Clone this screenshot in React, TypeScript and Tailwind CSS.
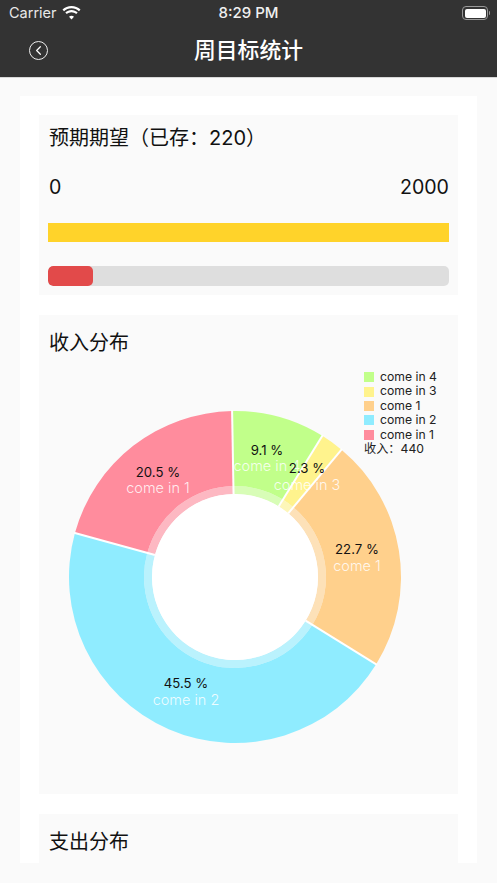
import { ChevronLeft } from "lucide-react";

const slices = [
  { name: "come in 4", value: 40, color: "#c1ff8a", pct: "9.1 %", x: 267, y: 450, ly: 466 },
  { name: "come in 3", value: 10, color: "#fff38d", pct: "2.3 %", x: 307, y: 468, ly: 485 },
  { name: "come 1", value: 100, color: "#ffd08c", pct: "22.7 %", x: 357, y: 549, ly: 566 },
  { name: "come in 2", value: 200, color: "#8fecff", pct: "45.5 %", x: 186, y: 683, ly: 700 },
  { name: "come in 1", value: 90, color: "#ff8c9d", pct: "20.5 %", x: 158, y: 472, ly: 488 },
];

const CX = 235;
const CY = 577;
const TOTAL = 440;
const START = (-1 * Math.PI) / 180; // the first slice starts just left of 12 o'clock

function polar(r: number, a: number) {
  return [CX + r * Math.sin(a), CY - r * Math.cos(a)];
}

function arc(r0: number, r1: number, a0: number, a1: number) {
  const large = a1 - a0 > Math.PI ? 1 : 0;
  const [x0, y0] = polar(r1, a0);
  const [x1, y1] = polar(r1, a1);
  const [x2, y2] = polar(r0, a1);
  const [x3, y3] = polar(r0, a0);
  return `M${x0} ${y0}A${r1} ${r1} 0 ${large} 1 ${x1} ${y1}L${x2} ${y2}A${r0} ${r0} 0 ${large} 0 ${x3} ${y3}Z`;
}

function PieChart() {
  let angle = START;
  const wedges = slices.map((s) => {
    const start = angle;
    angle += (s.value / TOTAL) * Math.PI * 2;
    return { ...s, start, end: angle };
  });

  return (
    <div className="relative flex-1">
      <svg viewBox="39 363 419 431" className="block w-full h-full">
        {wedges.map((w) => (
          <path key={w.name} d={arc(91, 166, w.start, w.end)} fill={w.color} />
        ))}
        {wedges.map((w) => (
          <path key={w.name} d={arc(83, 91, w.start, w.end)} fill={w.color} opacity={0.6} />
        ))}
        {wedges.map((w) => {
          const [x0, y0] = polar(83, w.start);
          const [x1, y1] = polar(167, w.start);
          return <line key={w.name} x1={x0} y1={y0} x2={x1} y2={y1} stroke="#fff" strokeWidth={2} />;
        })}
        <circle cx={CX} cy={CY} r={83} fill="#fff" />
        {wedges.map((w) => (
          <g key={w.name} textAnchor="middle" fontFamily="Inter, sans-serif">
            <text x={w.x} y={w.y + 5} fontSize={13.2} fill="#111">
              {w.pct}
            </text>
            <text x={w.x} y={w.ly + 5} fontSize={14.5} fontWeight={300} fill="#fff" fillOpacity={0.85}>
              {w.name}
            </text>
          </g>
        ))}
      </svg>

      {/* Legend */}
      <div className="absolute left-[325px] top-[7px] flex flex-col text-[12.2px] leading-[14.4px] text-[#222]">
        {slices.map((s) => (
          <div key={s.name} className="flex items-center gap-[6px]">
            <span className="w-[10px] h-[10px]" style={{ backgroundColor: s.color }} />
            {s.name}
          </div>
        ))}
        <div>收入：440</div>
      </div>
    </div>
  );
}

export default function App() {
  return (
    <div className="h-[883px] w-[497px] overflow-hidden bg-[#fafafa] font-['Inter','Noto_Sans_CJK_SC',sans-serif] text-[#111]">
      {/* Status bar + nav */}
      <div className="h-[78px] bg-[#333333] border-b border-[#d8d8d8] text-white">
        <div className="h-[26px] pl-[9px] pr-[7px] flex items-center justify-between relative text-[14.5px]">
          <div className="flex items-center gap-[5px] text-[#e8e8e8]">
            Carrier
            <svg width="19" height="14" viewBox="0 0 19 14" fill="#fff">
              <path d="M9.500 2.200c2.900 0 5.500 1.100 7.500 3l1.500-1.600C16.100 1.400 13 0 9.500 0S2.900 1.400.5 3.600L2 5.200c2-1.900 4.600-3 7.500-3z" />
              <path d="M9.500 6.300c1.800 0 3.400.7 4.700 1.800l1.500-1.600c-1.700-1.500-3.900-2.400-6.200-2.400s-4.500.9-6.200 2.400l1.500 1.600c1.300-1.100 2.900-1.800 4.700-1.800z" />
              <path d="M9.500 9.800c-1 0-1.800.4-2.500 1l2.500 2.800 2.500-2.800c-.7-.6-1.500-1-2.500-1z" />
            </svg>
          </div>
          <span className="absolute left-1/2 -translate-x-1/2 text-[15px] font-medium text-[#f0f0f0]">8:29 PM</span>
          <div className="flex items-center gap-[1px]">
            <div className="w-[26px] h-[14px] rounded-[4px] border border-[#999] p-[1.5px]">
              <div className="h-full w-full rounded-[2px] bg-white" />
            </div>
            <div className="w-[1px] h-[4px] bg-[#999] rounded-r-sm" />
          </div>
        </div>
        <div className="h-[51px] flex items-center justify-center relative">
          <div className="absolute left-[29px] top-[15px] w-[19px] h-[19px] rounded-full border-[1.5px] border-[#eee] flex items-center justify-center">
            <ChevronLeft size={15} strokeWidth={1.9} className="-ml-[1px]" />
          </div>
          <span className="text-[21.8px] font-medium -mt-[2px]">周目标统计</span>
        </div>
      </div>

      {/* Card */}
      <div className="mx-5 mt-[18px] h-[767px] overflow-hidden bg-white p-[19px] flex flex-col gap-[20px]">
        <section className="h-[180px] shrink-0 bg-[#fafafa] px-[9px]">
          <h2 className="text-[20px] leading-[28px] pt-[9px] pl-[1px] font-normal">预期期望（已存：220）</h2>
          <div className="mt-[21px] flex justify-between text-[19.6px] leading-[28px] pl-[1px]">
            <span>0</span>
            <span>2000</span>
          </div>
          <div className="mt-[22px] h-[19px] bg-[#ffd32a]" />
          <div className="mt-[24px] h-[20px] rounded-[5px] bg-[#dedede] overflow-hidden">
            <div className="h-full w-[45px] rounded-[5px] bg-[#e24a4a]" />
          </div>
        </section>

        <section className="h-[479px] shrink-0 bg-[#fafafa] flex flex-col">
          <h2 className="h-[48px] shrink-0 text-[20px] leading-[28px] pt-[14px] pl-[10px] font-normal">收入分布</h2>
          <PieChart />
        </section>

        <section className="h-[200px] shrink-0 bg-[#fafafa]">
          <h2 className="text-[20px] leading-[28px] pt-[14px] pl-[10px] font-normal">支出分布</h2>
        </section>
      </div>
    </div>
  );
}
